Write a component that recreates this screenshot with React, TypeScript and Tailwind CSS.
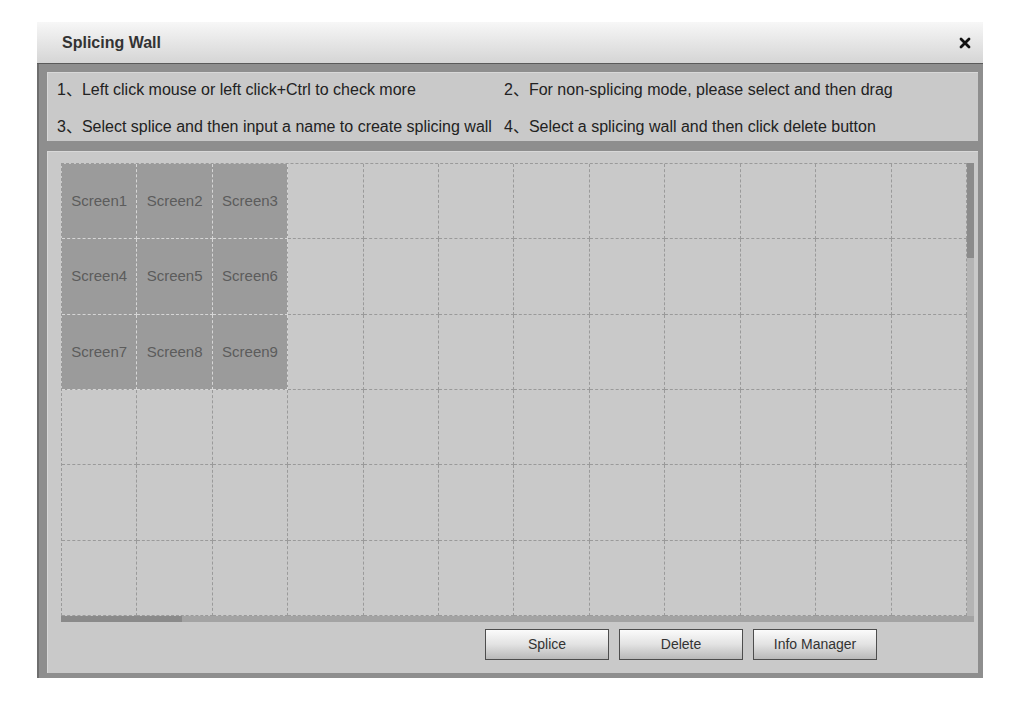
const FONT = { fontFamily: '"Liberation Sans", Arial, "Noto Sans CJK SC", sans-serif' };

const tips: [string, string][] = [
  ["1、Left click mouse or left click+Ctrl to check more", "2、For non-splicing mode, please select and then drag"],
  ["3、Select splice and then input a name to create splicing wall", "4、Select a splicing wall and then click delete button"],
];

const COLS = 12;
const ROWS = 6;

function Cell({ index }: { index: number }) {
  const row = Math.floor(index / COLS);
  const col = index % COLS;
  const picked = row < 3 && col < 3;
  const label = picked ? `Screen${row * 3 + col + 1}` : "";

  return (
    <div
      className={
        picked
          ? "flex items-center justify-center border-r border-b border-dashed border-[#d6d6d6] bg-[#9b9b9b] text-[15px] text-[#5c5c5c]"
          : "border-r border-b border-dashed border-[#9a9a9a] bg-[#c9c9c9]"
      }
    >
      {label}
    </div>
  );
}

function Button({ children }: { children: string }) {
  return (
    <button className="h-[31px] w-[124px] border border-[#4d4d4d] bg-gradient-to-b from-[#fbfbfb] via-[#e2e2e2] to-[#b9b9b9] text-[14px] text-[#333]">
      {children}
    </button>
  );
}

export default function App() {
  return (
    <div className="min-h-screen bg-white pt-[22px] pl-[37px]" style={FONT}>
      <div className="flex h-[656px] w-[946px] flex-col">
        {/* Title bar */}
        <div className="flex h-[42px] items-center justify-between border-b border-[#5a5a5a] bg-gradient-to-b from-[#f7f7f7] to-[#d5d5d5] pl-[25px] pr-[12px]">
          <span className="text-[16px] font-bold text-[#333]">Splicing Wall</span>
          <svg width="12" height="12" viewBox="0 0 12 12">
            <path d="M2 2 L10 10 M10 2 L2 10" stroke="#111" strokeWidth="2.8" strokeLinecap="round" />
          </svg>
        </div>

        {/* Body frame */}
        <div className="flex flex-1 flex-col gap-[10px] border-l-2 border-[#6e6e6e] bg-[#8e8e8e] pt-[8px] pr-[5px] pb-[5px] pl-[8px]">
          {/* Instructions */}
          <div className="flex h-[69px] flex-col gap-[19px] border-t border-l border-[#d8d8d8] bg-[#c9c9c9] pt-[8px] pl-[9px] text-[16px] leading-[18px] text-[#222]">
            {tips.map(([a, b], i) => (
              <div key={i} className="grid grid-cols-[447px_1fr]">
                <span className="whitespace-nowrap">{a}</span>
                <span className="whitespace-nowrap">{b}</span>
              </div>
            ))}
          </div>

          {/* Wall panel */}
          <div className="flex flex-1 flex-col border-t border-l border-[#d8d8d8] bg-[#c9c9c9] pt-[11px] pl-[13px]">
            <div className="flex">
              <div className="grid h-[453px] w-[906px] grid-cols-12 grid-rows-6 border-t border-l border-dashed border-[#9a9a9a]">
                {Array.from({ length: COLS * ROWS }, (_, i) => (
                  <Cell key={i} index={i} />
                ))}
              </div>
              <div className="flex w-[7px] flex-col bg-[#b4b4b4]">
                <div className="h-[95px] bg-[#8b8b8b]" />
              </div>
            </div>
            <div className="flex h-[6px] w-[913px] bg-[#a3a3a3]">
              <div className="w-[121px] bg-[#8a8a8a]" />
            </div>

            <div className="mt-[7px] flex justify-end gap-[10px] pr-[101px]">
              <Button>Splice</Button>
              <Button>Delete</Button>
              <Button>Info Manager</Button>
            </div>
          </div>
        </div>
      </div>
    </div>
  );
}
